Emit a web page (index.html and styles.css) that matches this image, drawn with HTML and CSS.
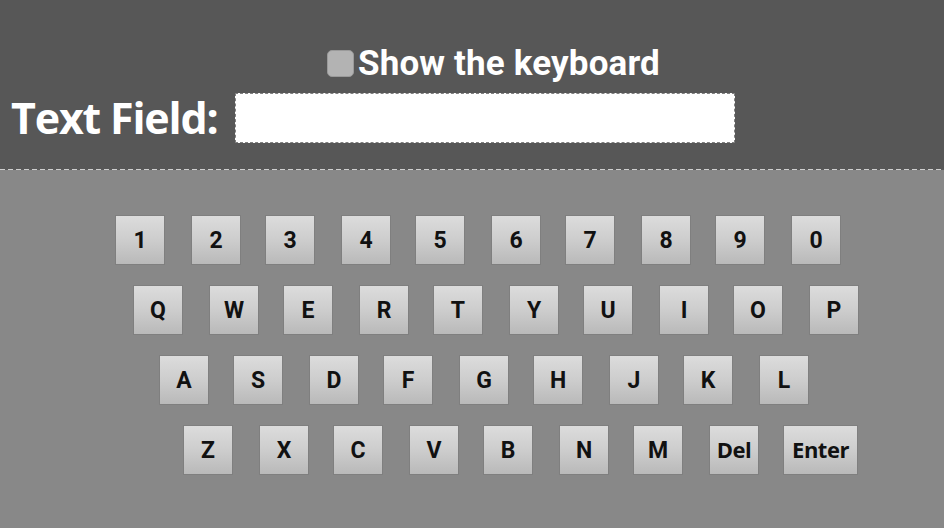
FILE: index.html
```html
<!DOCTYPE html>
<html>
<head>
<meta charset="utf-8">
<link rel="stylesheet" href="styles.css">
</head>
<body>
<div class="header">
  <label class="check-row">
    <span class="checkbox"></span>
    <span class="check-label">Show the keyboard</span>
  </label>
  <div class="field-row">
    <span class="field-label">Text Field:</span>
    <div class="field-input"></div>
  </div>
</div>
<div class="separator"></div>
<div class="keyboard">
  <div class="row row1">
    <div class="key">1</div><div class="key">2</div><div class="key">3</div><div class="key">4</div><div class="key">5</div><div class="key">6</div><div class="key">7</div><div class="key">8</div><div class="key">9</div><div class="key">0</div>
  </div>
  <div class="row row2">
    <div class="key">Q</div><div class="key">W</div><div class="key">E</div><div class="key">R</div><div class="key">T</div><div class="key">Y</div><div class="key">U</div><div class="key">I</div><div class="key">O</div><div class="key">P</div>
  </div>
  <div class="row row3">
    <div class="key">A</div><div class="key">S</div><div class="key">D</div><div class="key">F</div><div class="key">G</div><div class="key">H</div><div class="key">J</div><div class="key">K</div><div class="key">L</div>
  </div>
  <div class="row row4">
    <div class="key">Z</div><div class="key">X</div><div class="key">C</div><div class="key">V</div><div class="key">B</div><div class="key">N</div><div class="key">M</div><div class="key key-word">Del</div><div class="key key-word key-wide">Enter</div>
  </div>
</div>
</body>
</html>
```

FILE: styles.css
```css
html, body {
  margin: 0;
  padding: 0;
}
body {
  width: 944px;
  height: 528px;
  background: #888888;
  overflow: hidden;
  font-family: Roboto, "Noto Sans", sans-serif;
}
.header {
  height: 169px;
  background: #575757;
  box-sizing: border-box;
  padding-top: 49px;
}
.check-row {
  display: flex;
  align-items: center;
  padding-left: 327px;
  height: 28px;
}
.checkbox {
  width: 27px;
  height: 27px;
  box-sizing: border-box;
  border-radius: 5px;
  background: #b3b3b3;
  border: 1px solid #9a9a9a;
  flex-shrink: 0;
}
.check-label {
  margin-left: 4px;
  padding-top: 2px;
  color: #ffffff;
  font-family: Roboto, sans-serif;
  font-weight: bold;
  font-size: 35px;
  letter-spacing: 0.15px;
  line-height: 30px;
  white-space: nowrap;
}
.field-row {
  display: flex;
  align-items: center;
  margin-top: 16px;
  padding-left: 11px;
  height: 50px;
}
.field-label {
  color: #ffffff;
  font-family: "Open Sans", sans-serif;
  font-weight: bold;
  font-size: 43px;
  line-height: 50px;
  width: 224px;
  flex-shrink: 0;
  white-space: nowrap;
  letter-spacing: -1.2px;
}
.field-input {
  width: 500px;
  height: 50px;
  box-sizing: border-box;
  background: #ffffff;
  border: 1px dashed #808080;
  flex-shrink: 0;
}
.separator {
  height: 1px;
  background: repeating-linear-gradient(90deg, #cfcfcf 0 5px, #5a5a5a 5px 8px);
}
.keyboard {
  padding-top: 45px;
  display: flex;
  flex-direction: column;
  gap: 20px;
}
.row {
  display: flex;
  gap: 24px;
}
.row1 { padding-left: 115px; }
.row2 { padding-left: 133px; }
.row3 { padding-left: 159px; }
.row4 { padding-left: 183px; }
.row1 .key:nth-child(even),
.row2 .key:nth-child(even),
.row4 .key:nth-child(even),
.row3 .key:nth-child(odd):not(:first-child) {
  margin-left: 2px;
}
.key {
  width: 50px;
  height: 50px;
  box-sizing: border-box;
  border: 1px solid #7f7f7f;
  background: linear-gradient(180deg, #dcdcdc 0%, #cdcdcd 50%, #b9b9b9 100%);
  display: flex;
  align-items: center;
  justify-content: center;
  color: #111111;
  font-family: Roboto, sans-serif;
  font-weight: bold;
  font-size: 23px;
  flex-shrink: 0;
}
.key-word {
  font-family: "Open Sans", sans-serif;
  font-size: 22px;
  letter-spacing: -0.5px;
  padding-bottom: 3px;
}
.key-wide {
  width: 75px;
}
```
